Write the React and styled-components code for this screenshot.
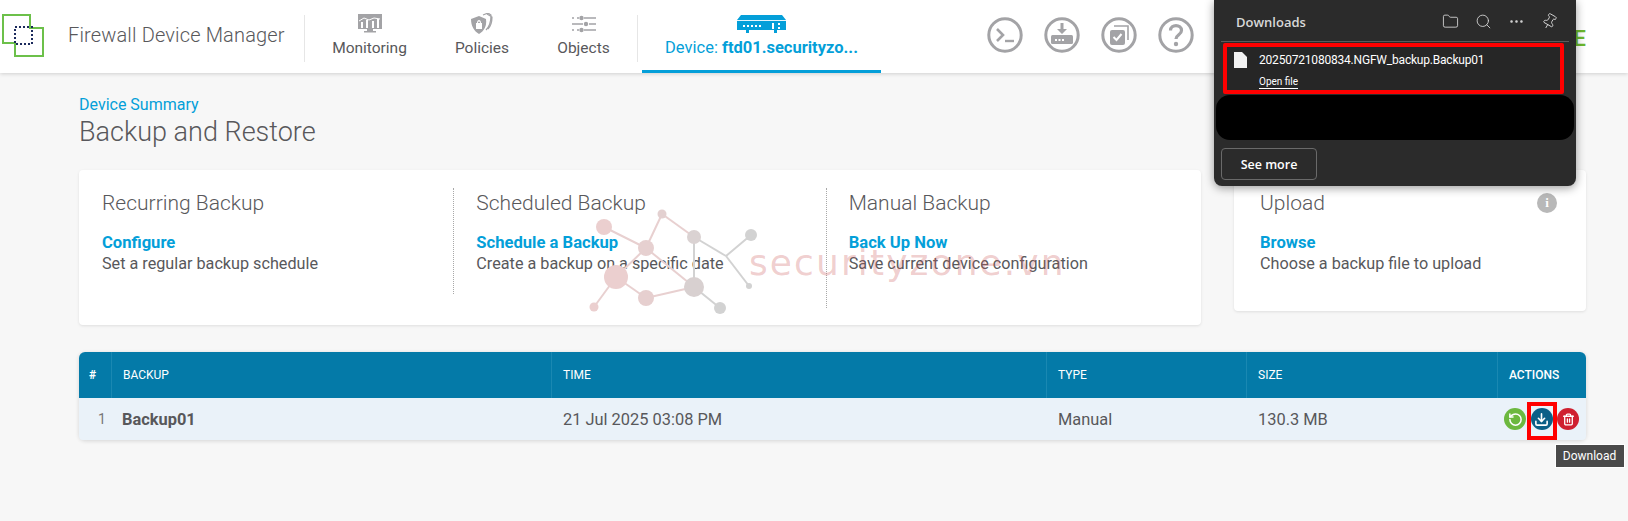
import React from "react";
import styled, { createGlobalStyle } from "styled-components";
import { Folder, Search, Ellipsis, Pin, RotateCcw, Download, Trash2 } from "lucide-react";

const GlobalStyle = createGlobalStyle`
  html, body { margin: 0; padding: 0; height: 100%; }
  body { background: #f7f7f7; font-family: Roboto, "Liberation Sans", sans-serif; color: #58585b; overflow: hidden; }
  * { box-sizing: border-box; }
`;

const Page = styled.div`
  position: relative;
  width: 1628px;
  height: 521px;
  overflow: hidden;
`;

const Header = styled.header`
  height: 73px;
  background: #fff;
  box-shadow: 0 1px 4px rgba(0, 0, 0, 0.16);
  display: flex;
  align-items: stretch;
  position: relative;
`;

const Logo = styled.div`
  width: 68px;
  padding: 14px 0 0 2px;
`;

const Brand = styled.div`
  width: 236px;
  font-size: 20px;
  font-weight: 300;
  color: #58585b;
  line-height: 70px;
  letter-spacing: 0.15px;
`;

const Rule = styled.div`
  width: 1px;
  height: 47px;
  margin-top: 15px;
  background: #e6e6e6;
`;

const NavItem = styled.div`
  width: ${(p) => p.$w}px;
  display: flex;
  flex-direction: column;
  align-items: center;
  padding-top: 13px;
  font-size: 15.5px;
  color: #58585b;
  svg { height: 22px; display: block; }
  span { line-height: 20px; margin-top: 3px; }
`;

const DeviceTab = styled.div`
  width: 239px;
  margin-left: 4px;
  height: 73px;
  border-bottom: 3px solid #049fd9;
  display: flex;
  flex-direction: column;
  align-items: center;
  padding-top: 15px;
  font-size: 16.5px;
  color: #049fd9;
  svg { display: block; }
  span { line-height: 20px; margin-top: 5px; white-space: nowrap; }
  b { font-weight: 700; }
`;

const RoundIcons = styled.div`
  display: flex;
  gap: 21px;
  margin-left: 106px;
  padding-top: 17px;
`;

const Round = styled.div`
  width: 36px;
  height: 36px;
  svg { display: block; }
`;

const CutText = styled.div`
  position: absolute;
  right: 42px;
  top: 26px;
  font-size: 22px;
  line-height: 26px;
  font-weight: 500;
  color: #6cb82e;
`;

const Content = styled.main`
  padding: 21px 42px 0 79px;
`;

const Crumb = styled.div`
  font-size: 16px;
  line-height: 21px;
  color: #049fd9;
`;

const Title = styled.h1`
  margin: 0;
  font-size: 27px;
  line-height: 34px;
  font-weight: 300;
  color: #58585b;
`;

const Cards = styled.div`
  display: flex;
  align-items: flex-start;
  gap: 33px;
  margin-top: 21px;
`;

const Card = styled.section`
  width: ${(p) => p.$w}px;
  height: ${(p) => p.$h}px;
  background: #fff;
  border-radius: 4px;
  box-shadow: 0 1px 3px rgba(0, 0, 0, 0.1);
  padding-top: 18px;
  display: flex;
  position: relative;
`;

const Column = styled.div`
  width: ${(p) => p.$w}px;
  padding-left: ${(p) => p.$pad}px;
`;

const Dots = styled.div`
  width: 0;
  height: ${(p) => p.$h}px;
  border-left: 1px dotted #a8a8a8;
`;

const CardTitle = styled.h2`
  margin: 0;
  font-size: 21px;
  line-height: 30px;
  font-weight: 300;
  color: #58585b;
`;

const CardLink = styled.a`
  display: block;
  margin-top: 14px;
  font-size: 16.6px;
  line-height: 22px;
  font-weight: 700;
  color: #049fd9;
`;

const CardText = styled.p`
  margin: 0;
  font-size: 16.2px;
  line-height: 19px;
  color: #58585b;
`;

const InfoDot = styled.div`
  position: absolute;
  right: 29px;
  top: 23px;
  width: 20px;
  height: 20px;
  border-radius: 50%;
  background: #b8b8b8;
  color: #fff;
  font: 700 13px/20px "Liberation Serif", serif;
  text-align: center;
`;

const Table = styled.div`
  margin-top: 27px;
  width: 1507px;
  border-radius: 6px;
  box-shadow: 0 1px 4px rgba(0, 0, 0, 0.14);
`;

const TableRow = styled.div`
  display: grid;
  grid-template-columns: 32px 440px 495px 200px 251px 89px;
  align-items: stretch;
  height: ${(p) => p.$h}px;
  background: ${(p) => p.$bg};
  border-radius: ${(p) => p.$r};
`;

const Th = styled.div`
  display: flex;
  align-items: center;
  padding: 0 0 1px ${(p) => p.$pad || 11}px;
  font-size: 12px;
  font-weight: ${(p) => p.$weight || 400};
  color: #fff;
  border-left: ${(p) => (p.$first ? "none" : "1px solid #1a88b2")};
`;

const Td = styled.div`
  display: flex;
  align-items: center;
  padding-left: ${(p) => p.$pad || 12}px;
  font-size: ${(p) => p.$size || 16.4}px;
  font-weight: ${(p) => (p.$bold ? 700 : 400)};
  color: ${(p) => p.$color || "#58585b"};
`;

const Actions = styled.div`
  display: flex;
  align-items: center;
  gap: 4.5px;
  padding: 0 0 0 7px;
  position: relative;
`;

const ActionBtn = styled.div`
  width: 22px;
  height: 22px;
  border-radius: 50%;
  background: ${(p) => p.$bg};
  color: #fff;
  display: flex;
  align-items: center;
  justify-content: center;
  position: relative;
`;

const RedFrame = styled.div`
  position: absolute;
  left: -4px;
  top: -6px;
  width: 30px;
  height: 38px;
  border: 4px solid #ff0000;
`;

const Tooltip = styled.div`
  position: absolute;
  left: 24px;
  top: 36px;
  width: 70px;
  height: 24px;
  background: #4a4a4a;
  border: 1px solid #fff;
  color: #fff;
  font-size: 12px;
  line-height: 22px;
  text-align: center;
`;

const Popup = styled.aside`
  position: absolute;
  left: 1214px;
  top: 0;
  width: 362px;
  height: 186px;
  background: #2b2b2b;
  border-radius: 0 0 8px 8px;
  box-shadow: 0 2px 10px rgba(0, 0, 0, 0.4);
  font-family: "Open Sans", "Noto Sans", sans-serif;
  color: #fff;
  display: flex;
  flex-direction: column;
  padding: 0 2px;
`;

const PopupHead = styled.div`
  height: 42px;
  margin: 0 5px;
  border-bottom: 1px solid #5c5c5c;
  display: flex;
  align-items: center;
  padding: 2px 11px 0 15px;
  color: #d8d8d8;
`;

const PopupTitle = styled.div`
  flex: 1;
  font-size: 13px;
  font-weight: 600;
`;

const PopupTools = styled.div`
  display: flex;
  gap: 16px;
  color: #dcdcdc;
  svg { display: block; }
`;

const FileRow = styled.div`
  height: 51px;
  margin: 1px 10px 0 7px;
  border: 4px solid #ff0000;
  border-radius: 2px;
  background: #262626;
  display: flex;
  padding: 5px 0 0 7px;
`;

const FileBody = styled.div`
  margin-left: 12px;
`;

const FileName = styled.div`
  font-family: Roboto, sans-serif;
  font-size: 12px;
  line-height: 16px;
  letter-spacing: -0.2px;
  color: #fff;
`;

const OpenLink = styled.a`
  display: inline-block;
  margin-top: 1px;
  font-family: Roboto, sans-serif;
  font-size: 10px;
  line-height: 13px;
  color: #fff;
  border-bottom: 1px solid #fff;
`;

const Masked = styled.div`
  height: 45px;
  margin-top: 1px;
  background: #000;
  border-radius: 14px;
`;

const SeeMore = styled.button`
  align-self: flex-start;
  width: 96px;
  height: 32px;
  margin: 8px 0 0 5px;
  background: transparent;
  border: 1px solid #6a6a6a;
  border-radius: 4px;
  color: #fff;
  font-family: inherit;
  font-size: 12.5px;
  font-weight: 600;
`;

const Watermark = styled.div`
  position: absolute;
  inset: 0;
  pointer-events: none;
`;

const MarkText = styled.div`
  position: absolute;
  left: 749px;
  top: 240px;
  font-family: "DejaVu Sans", sans-serif;
  font-size: 36px;
  line-height: 46px;
  letter-spacing: 2.1px;
  color: rgba(205, 90, 90, 0.3);
  white-space: nowrap;
`;

const gray = "#a3a3a6";

const MonitorIcon = () => (
  <svg width="24" height="20" viewBox="0 0 24 20">
    <path fill={gray} d="M0 0h24v15H0zM9 15h6v2h3v1.5H6V17h3z" />
    <path fill="#fff" d="M3 14V8h2v6zM8 14V6h2v8zM14 14V7h2v7zM19 14V5h2v9z" />
    <path fill="none" stroke="#fff" d="M1 7l5-3 5 2 5-2 6 1" />
  </svg>
);

const ShieldIcon = () => (
  <svg width="24" height="22" viewBox="0 0 24 22">
    <path fill="none" stroke={gray} strokeWidth="1.2" d="M13 2l5-2 3 2c0 6-1 11-5 15M17 1l5 3c0 5-1 9-4 12" />
    <path fill={gray} d="M9 3l7 3c1 7-2 12-7 15C4 18 1 13 1 6z" />
    <path fill="#fff" d="M6 10h6v6H6zM7 10c0-4 4-4 4 0h-1c0-2-2-2-2 0z" />
  </svg>
);

const SlidersIcon = () => (
  <svg width="24" height="17" viewBox="0 0 24 17">
    <g fill="none" stroke={gray} strokeWidth="1.6">
      <path d="M0 2.500h2M5 2.500h2" />
      <path d="M12 2.500h12M0 8.500h11M17 8.500h7M0 14.500h2M5 14.500h2M12 14.500h12" />
    </g>
    <circle cx="9.500" cy="2.500" r="2.200" fill={gray} />
    <circle cx="14" cy="8.500" r="2.200" fill={gray} />
    <circle cx="9.500" cy="14.500" r="2.200" fill={gray} />
  </svg>
);

const DeviceIcon = () => (
  <svg width="49" height="18" viewBox="0 0 49 18">
    <path fill="#049fd9" d="M4 0h41l4 5v10H40v3h-3v-3H12v3H9v-3H0V5z" />
    <path fill="#fff" d="M6 10h2v2H6zM10 10h2v2h-2zM14 10h2v2h-2zM18 10h2v2h-2zM22 10h2v2h-2zM35 8h2v6h-2zM41 8h2v2h-2zM41 12h2v2h-2z" />
    <path fill="#fff" d="M0 5h49v1H0z" opacity="0.9" />
  </svg>
);

const RoundFrame = ({ children }) => (
  <Round>
    <svg width="36" height="36" viewBox="0 0 36 36">
      <circle cx="18" cy="18" r="16.2" fill="none" stroke={gray} strokeWidth="3" />
      {children}
    </svg>
  </Round>
);

const Molecule = () => {
  const nodes = {
    a: [604, 227, 8, "#ebcfcf"],
    b: [662, 214, 4.5, "#e3d0d0"],
    c: [646, 248, 8, "#e6d0d0"],
    d: [694, 237, 7, "#dad2d2"],
    e: [751, 235, 6, "#d2d2d2"],
    f: [726, 256, 0, "#ccc"],
    g: [749, 286, 3, "#d2d2d2"],
    h: [616, 277, 12, "#ebcfcf"],
    i: [646, 298, 8, "#e6cfcf"],
    j: [694, 287, 10, "#d8d0d0"],
    k: [720, 308, 6, "#d2d2d2"],
    l: [594, 307, 4.5, "#ebcfcf"],
  };
  const edges = ["ac", "bc", "bd", "df", "fe", "fg", "dj", "cj", "ch", "hi", "ij", "jk", "hl"];
  return (
    <svg width="1628" height="521" viewBox="0 0 1628 521">
      {edges.map((e) => {
        const p = nodes[e[0]];
        const q = nodes[e[1]];
        return <line key={e} x1={p[0]} y1={p[1]} x2={q[0]} y2={q[1]} stroke={p[0] > 680 ? "#d2d2d2" : "#e8d0d0"} strokeWidth="2" />;
      })}
      {Object.keys(nodes).map((k) => (
        <circle key={k} cx={nodes[k][0]} cy={nodes[k][1]} r={nodes[k][2]} fill={nodes[k][3]} />
      ))}
    </svg>
  );
};

export default function App() {
  return (
    <Page>
      <GlobalStyle />
      <Header>
        <Logo>
          <svg width="42" height="43" viewBox="0 0 42 43">
            <path fill="none" stroke="#6cc04a" strokeWidth="2" d="M1 1h27v13h13v28H13V29H1z" />
            <rect x="13" y="13" width="17" height="17" fill="none" stroke="#1b2a5c" strokeWidth="2" strokeDasharray="2 2" />
          </svg>
        </Logo>
        <Brand>Firewall Device Manager</Brand>
        <Rule />
        <NavItem $w={129}><MonitorIcon /><span>Monitoring</span></NavItem>
        <NavItem $w={96}><ShieldIcon /><span>Policies</span></NavItem>
        <NavItem $w={107}><SlidersIcon /><span>Objects</span></NavItem>
        <Rule />
        <DeviceTab>
          <DeviceIcon />
          <span>Device: <b>ftd01.securityzo...</b></span>
        </DeviceTab>
        <RoundIcons>
          <RoundFrame>
            <path fill="none" stroke={gray} strokeWidth="2.6" d="M10 12l6 6-6 6" />
            <path stroke={gray} strokeWidth="2.4" d="M18 24h9" />
          </RoundFrame>
          <RoundFrame>
            <path fill={gray} d="M16.5 6h3v6h3.5l-5 5-5-5h3.500z" />
            <rect x="7" y="18" width="22" height="9" rx="1.500" fill={gray} />
            <path fill="#fff" d="M11 22h2v2h-2zM14.500 22h2v2h-2zM18 22h2v2h-2z" />
          </RoundFrame>
          <RoundFrame>
            <path fill="none" stroke={gray} strokeWidth="1.6" d="M13 9h14v14" />
            <rect x="9" y="13" width="15" height="15" rx="2" fill={gray} />
            <path fill="none" stroke="#fff" strokeWidth="2" d="M12.500 20l3 3 5-6" />
          </RoundFrame>
          <RoundFrame>
            <path fill="none" stroke={gray} strokeWidth="3.200" d="M12.500 13.500c0-6.500 11-6.500 11 0 0 4.500-5.500 4-5.500 8.500" />
            <circle cx="18" cy="27" r="2.200" fill={gray} />
          </RoundFrame>
        </RoundIcons>
        <CutText>E</CutText>
      </Header>
      <Content>
        <Crumb>Device Summary</Crumb>
        <Title>Backup and Restore</Title>
        <Cards>
          <Card $w={1122} $h={155}>
            <Column $w={375} $pad={23}>
              <CardTitle>Recurring Backup</CardTitle>
              <CardLink>Configure</CardLink>
              <CardText>Set a regular backup schedule</CardText>
            </Column>
            <Dots $h={106} />
            <Column $w={372} $pad={22}>
              <CardTitle>Scheduled Backup</CardTitle>
              <CardLink>Schedule a Backup</CardLink>
              <CardText>Create a backup on a specific date</CardText>
            </Column>
            <Dots $h={120} />
            <Column $w={375} $pad={22}>
              <CardTitle>Manual Backup</CardTitle>
              <CardLink>Back Up Now</CardLink>
              <CardText>Save current device configuration</CardText>
            </Column>
          </Card>
          <Card $w={352} $h={141}>
            <Column $w={352} $pad={26}>
              <CardTitle>Upload</CardTitle>
              <CardLink>Browse</CardLink>
              <CardText>Choose a backup file to upload</CardText>
            </Column>
            <InfoDot>i</InfoDot>
          </Card>
        </Cards>
        <Table>
          <TableRow $h={46} $bg="#047aa8" $r="6px 6px 0 0">
            <Th $first $weight={700} $pad={10}>#</Th>
            <Th>BACKUP</Th>
            <Th>TIME</Th>
            <Th>TYPE</Th>
            <Th>SIZE</Th>
            <Th $weight={500}>ACTIONS</Th>
          </TableRow>
          <TableRow $h={42} $bg="#eaf2f9" $r="0 0 4px 4px">
            <Td $pad={19} $size={14} $color="#777">1</Td>
            <Td $bold $pad={11}>Backup01</Td>
            <Td>21 Jul 2025 03:08 PM</Td>
            <Td>Manual</Td>
            <Td>130.3 MB</Td>
            <Actions>
              <ActionBtn $bg="#6cb83f"><RotateCcw size={15} strokeWidth={2.4} /></ActionBtn>
              <ActionBtn $bg="#0b5f87">
                <Download size={15} strokeWidth={2.6} />
                <RedFrame />
                <Tooltip>Download</Tooltip>
              </ActionBtn>
              <ActionBtn $bg="#cf2030"><Trash2 size={13} strokeWidth={2.4} /></ActionBtn>
            </Actions>
          </TableRow>
        </Table>
      </Content>
      <Watermark>
        <Molecule />
        <MarkText>securityzone.vn</MarkText>
      </Watermark>
      <Popup>
        <PopupHead>
          <PopupTitle>Downloads</PopupTitle>
          <PopupTools>
            <Folder size={17} strokeWidth={1.2} />
            <Search size={17} strokeWidth={1.2} />
            <Ellipsis size={17} strokeWidth={1.6} />
            <Pin size={17} strokeWidth={1.2} style={{ transform: "rotate(30deg)" }} />
          </PopupTools>
        </PopupHead>
        <FileRow>
          <svg width="13" height="16" viewBox="0 0 13 16"><path fill="#f2f2f2" d="M0 0h8l5 5v11H0z" /></svg>
          <FileBody>
            <FileName>20250721080834.NGFW_backup.Backup01</FileName>
            <OpenLink>Open file</OpenLink>
          </FileBody>
        </FileRow>
        <Masked />
        <SeeMore>See more</SeeMore>
      </Popup>
    </Page>
  );
}
